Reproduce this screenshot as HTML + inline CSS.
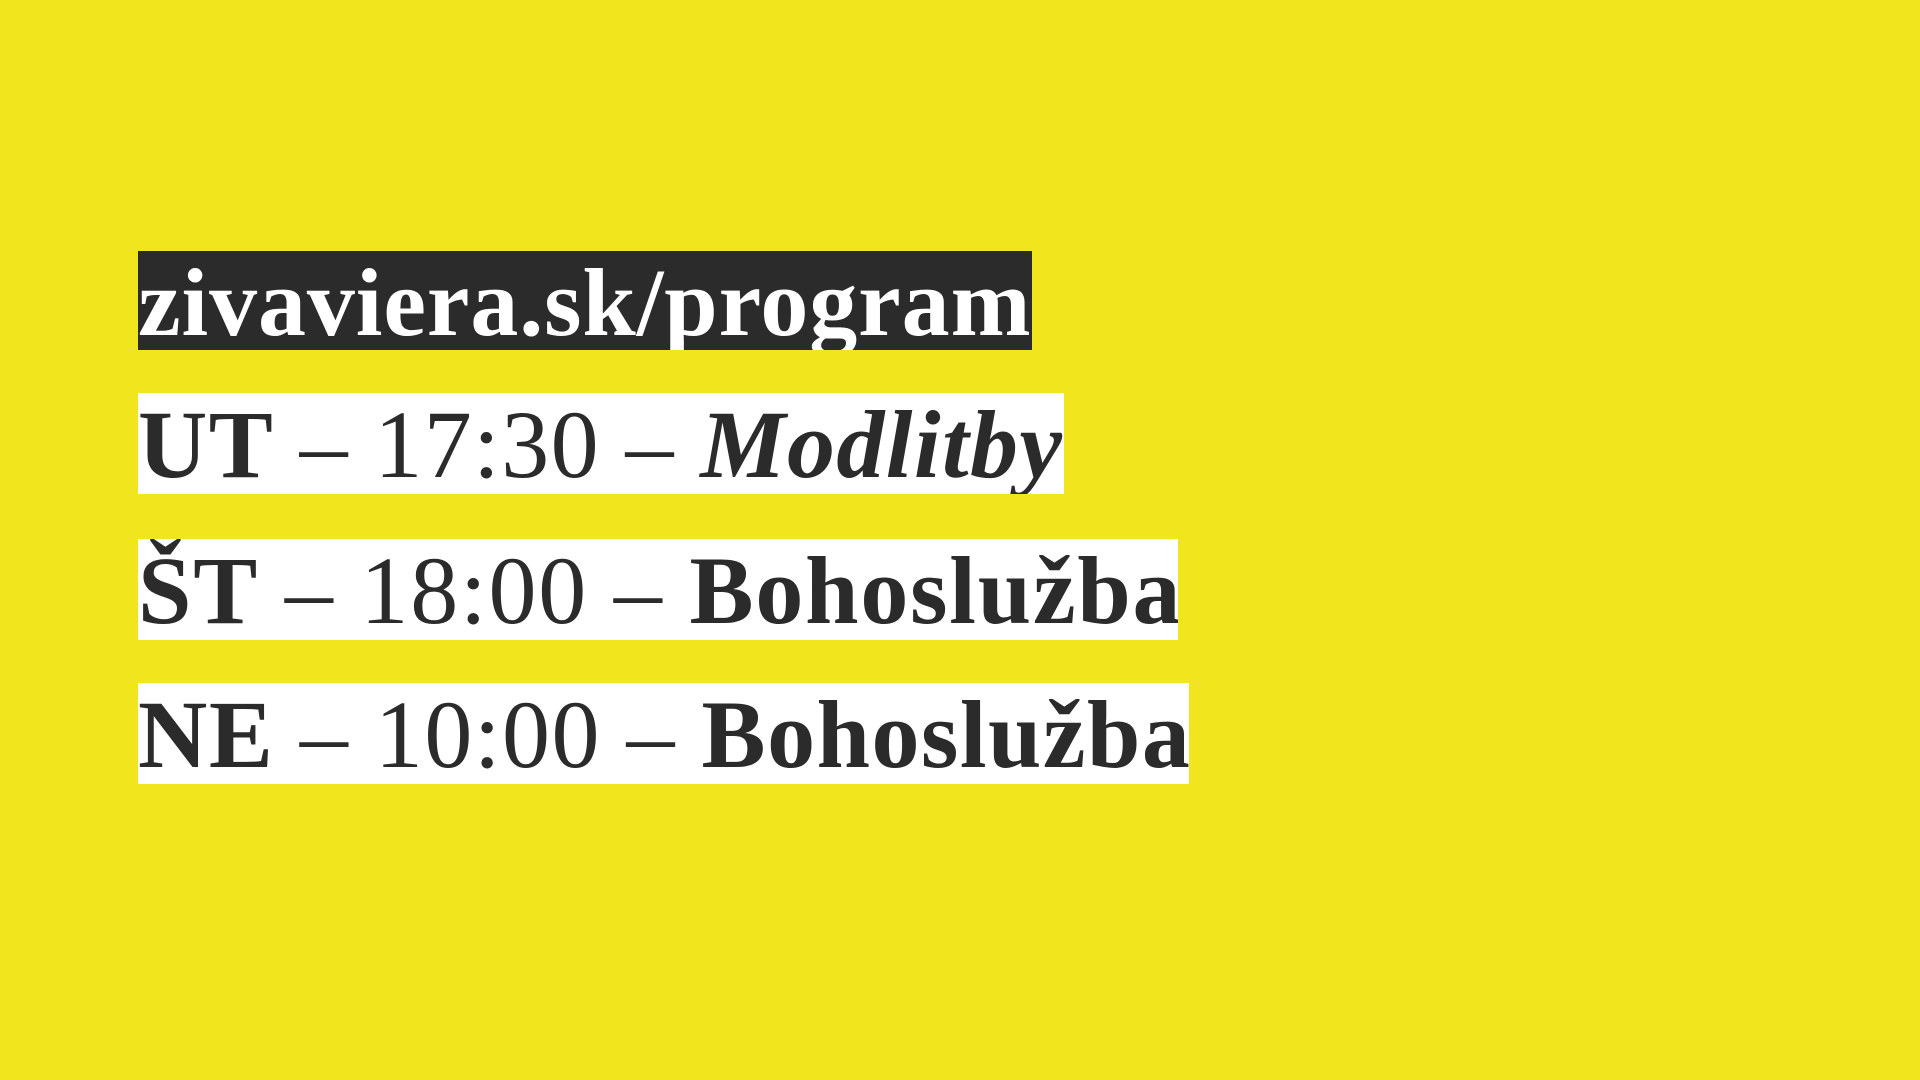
<!DOCTYPE html>
<html><head><meta charset="utf-8"><style>
html,body{margin:0;padding:0;width:1920px;height:1080px;background:#f1e51e;overflow:hidden}
.b{position:absolute;left:138px;height:101px;font-family:"Liberation Serif",serif;font-size:96px;line-height:100px;white-space:nowrap;color:#2b2b2b;background:#fff;padding-top:2px;box-sizing:border-box;overflow:hidden}
.k{font-weight:700}
.r{font-weight:400}
</style></head><body>
<div class="b k" style="top:251px;width:894px;height:99px;background:#2b2b2b;color:#fff;letter-spacing:0.9px">zivaviera.sk/program</div>
<div class="b" style="top:393px;width:926px;letter-spacing:1.4px"><span class="k">UT</span><span class="r"> – 17:30 – </span><span class="k" style="font-style:italic">Modlitby</span></div>
<div class="b" style="top:539px;width:1040px;letter-spacing:1.8px"><span class="k">ŠT</span><span class="r"> – 18:00 – </span><span class="k">Bohoslužba</span></div>
<div class="b" style="top:683px;width:1051px;letter-spacing:1.5px"><span class="k">NE</span><span class="r"> – 10:00 – </span><span class="k">Bohoslužba</span></div>
</body></html>
